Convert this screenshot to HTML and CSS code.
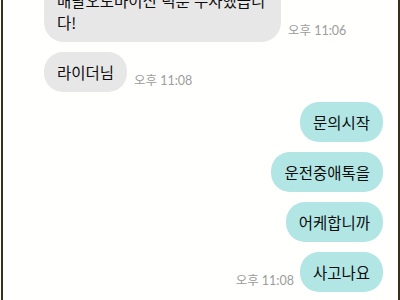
FILE: index.html
```html
<!DOCTYPE html>
<html lang="ko">
<head>
    <meta charset="UTF-8">
    <meta name="viewport" content="width=device-width, initial-scale=1.0">
    <title>채팅</title>
    <link rel="stylesheet" href="styles.css">
</head>
<body>
    <div class="frame">
        <div class="chat">
            <div class="row received">
                <div class="bubble long">배달오토바이신 덕분 무사했습니다!</div>
                <span class="time">오후 11:06</span>
            </div>
            <div class="row received">
                <div class="bubble">라이더님</div>
                <span class="time">오후 11:08</span>
            </div>
            <div class="row sent">
                <div class="bubble">문의시작</div>
            </div>
            <div class="row sent">
                <div class="bubble">운전중애톡을</div>
            </div>
            <div class="row sent">
                <div class="bubble">어케합니까</div>
            </div>
            <div class="row sent">
                <span class="time">오후 11:08</span>
                <div class="bubble">사고나요</div>
            </div>
        </div>
    </div>
</body>
</html>
```

FILE: styles.css
```css
* {
    margin: 0;
    padding: 0;
    box-sizing: border-box;
}

html, body {
    height: 100%;
    overflow: hidden;
}

body {
    background-color: #fff;
    font-family: "Noto Sans CJK KR", "Noto Sans", sans-serif;
    color: #0d0d0d;
}

.frame {
    height: 300px;
    margin-left: 1px;
    border-left: 2px solid #3a2f1d;
    border-right: 2px solid #3a2f1d;
    background: #fffffe;
    overflow: hidden;
}

.chat {
    height: 100%;
    display: flex;
    flex-direction: column;
    justify-content: flex-end;
    gap: 10px;
    padding: 0 15px 8px 41px;
}

.row {
    display: flex;
    align-items: flex-end;
    gap: 7px;
}

.row.sent {
    justify-content: flex-end;
    gap: 6px;
}

.bubble {
    font-size: 15.5px;
    line-height: 22px;
    padding: 9px 13px;
    border-radius: 19px;
    flex-shrink: 0;
}

.received .bubble {
    background-color: #e7e7e7;
}

.sent .bubble {
    background-color: #b2e6e5;
}

.bubble.long {
    width: 237px;
    padding-right: 0;
    border-radius: 20px;
}

.time {
    font-family: "Lato", "Noto Sans CJK KR", sans-serif;
    font-size: 12.5px;
    line-height: 16px;
    color: #9c9c9c;
    margin-bottom: 3px;
    white-space: nowrap;
}
```
